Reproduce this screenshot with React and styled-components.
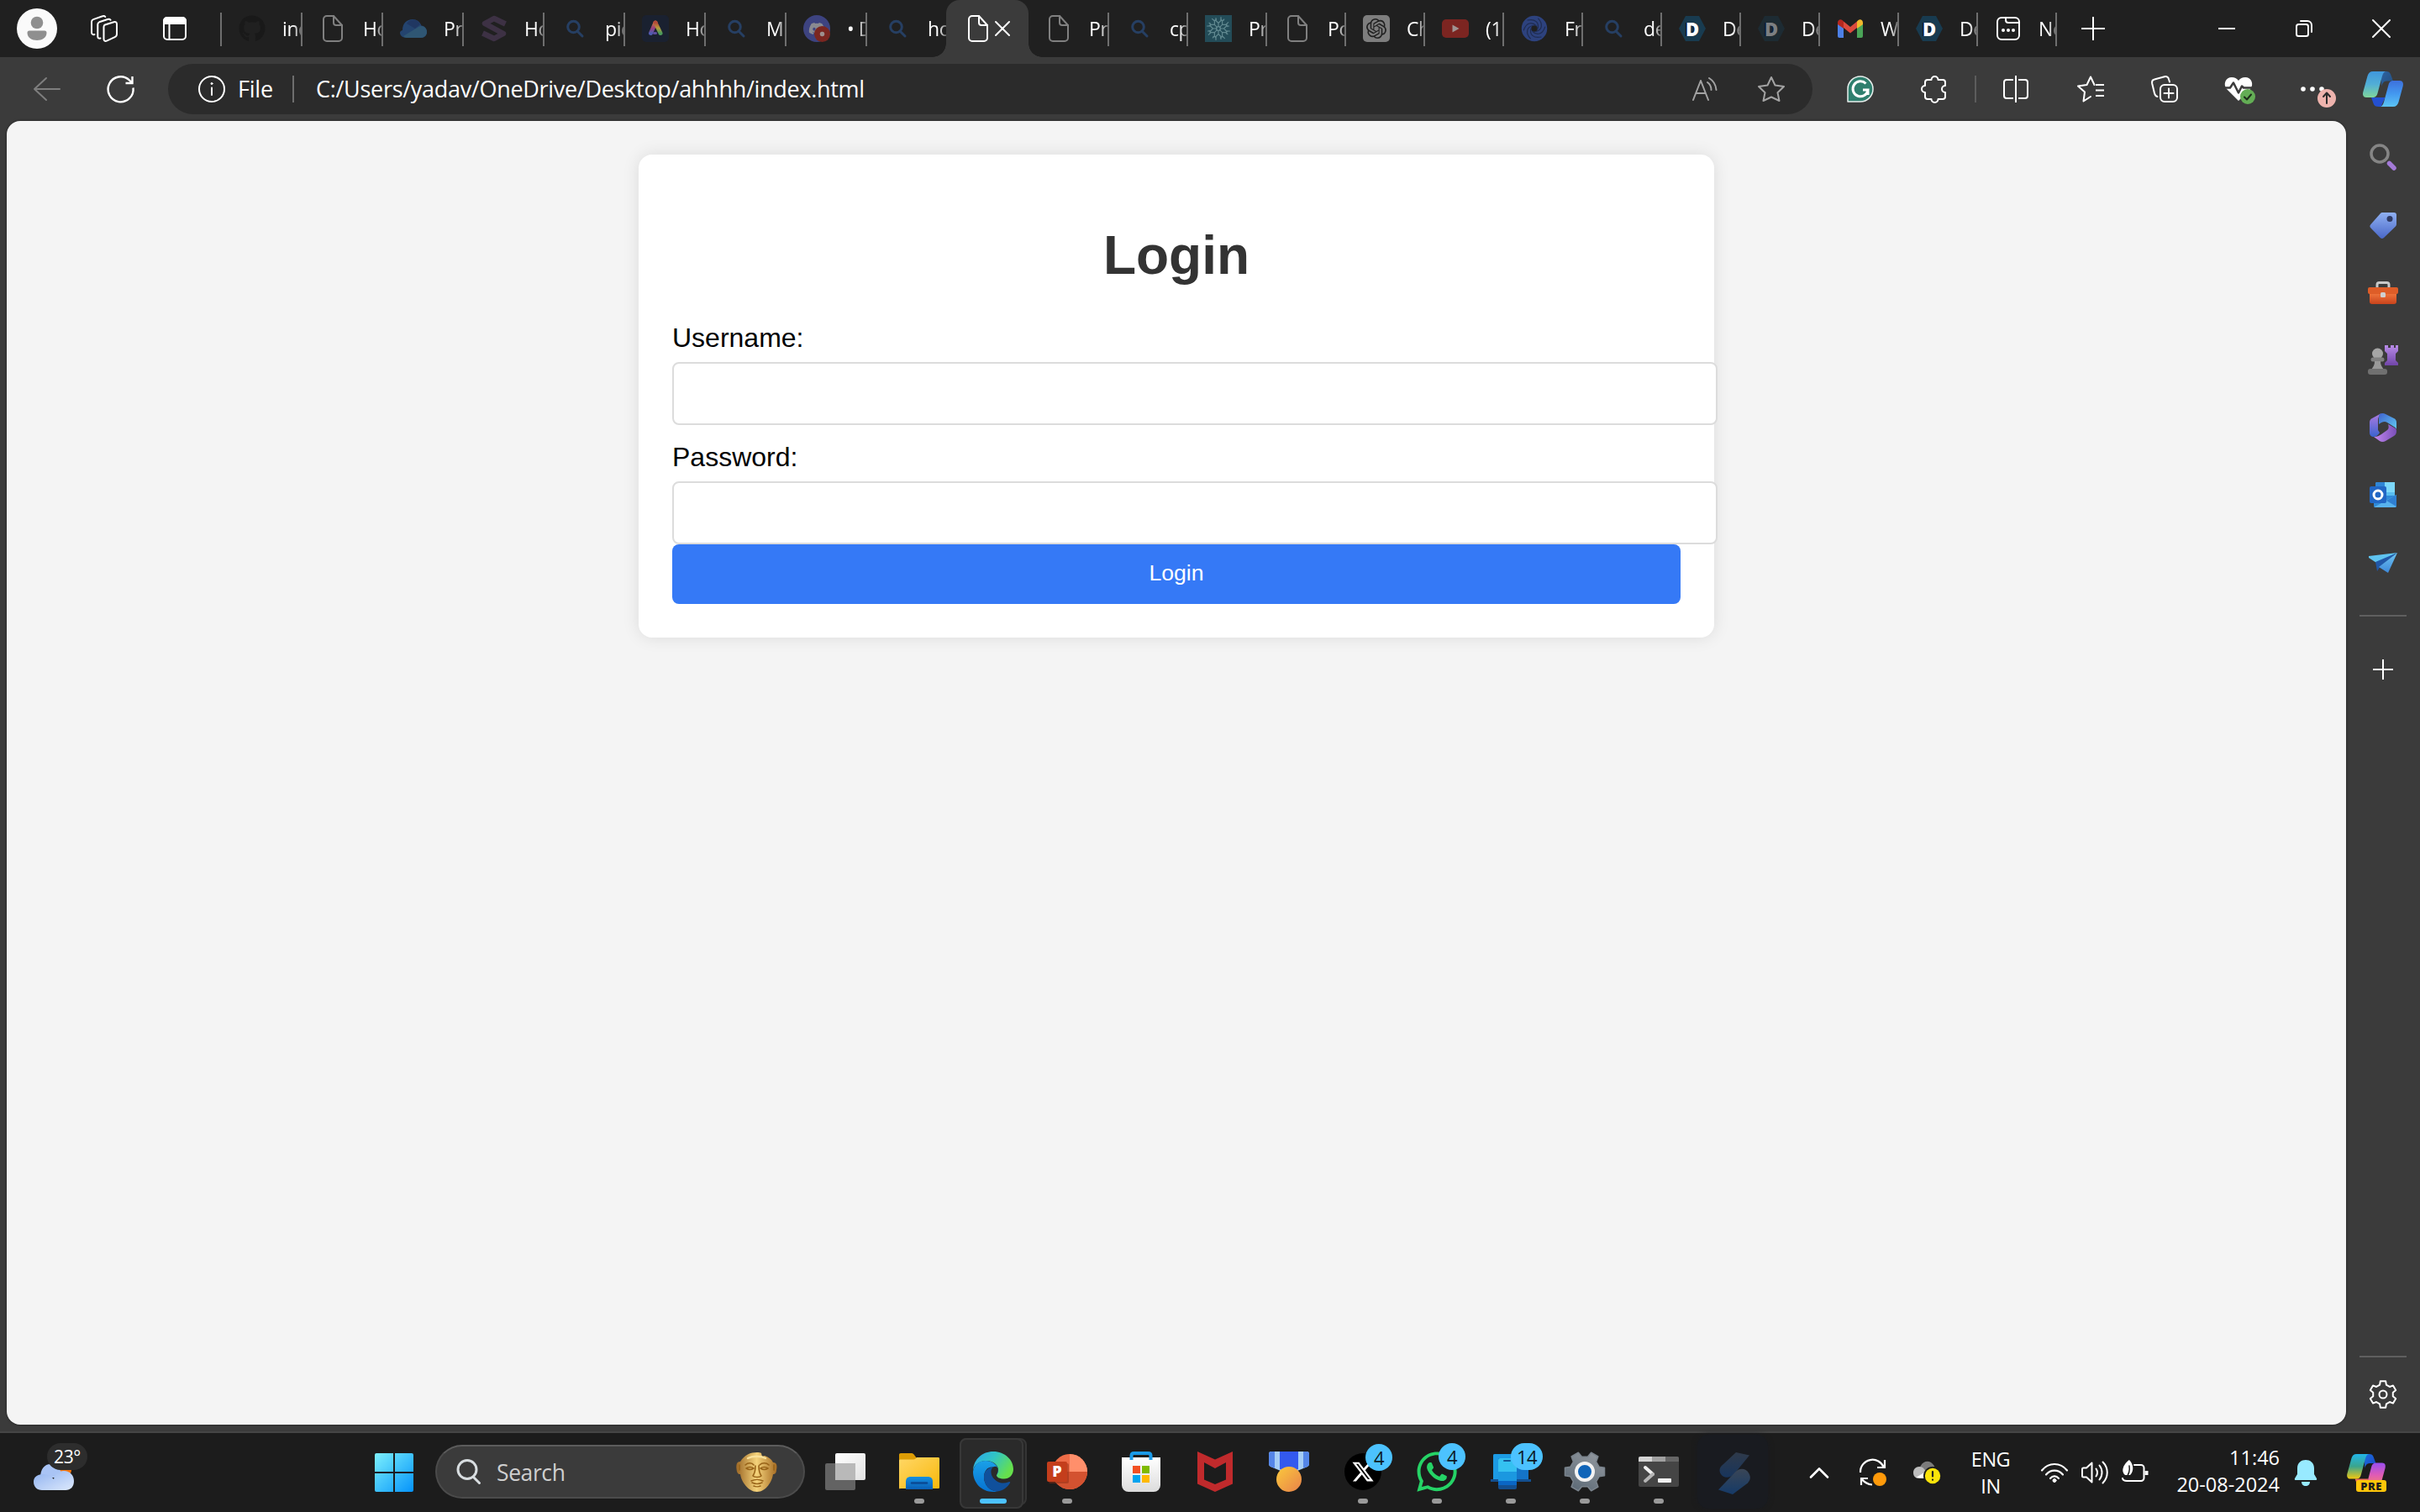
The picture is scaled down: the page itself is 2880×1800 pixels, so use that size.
import React from "react";
import styled, { createGlobalStyle, css } from "styled-components";
import { FaGithub, FaDiscord, FaWhatsapp } from "react-icons/fa";
import { FaXTwitter } from "react-icons/fa6";
import { SiOpenai } from "react-icons/si";

const GlobalStyle = createGlobalStyle`
  * { box-sizing: border-box; }
  body { margin: 0; background: #1c1c1c; font-family: "Open Sans", "Noto Sans", sans-serif; }
  svg { display: block; flex: none; overflow: visible; }
  button { font: inherit; color: inherit; }
`;

const Desktop = styled.div`
  width: 2880px;
  height: 1800px;
  display: flex;
  flex-direction: column;
  overflow: hidden;
  background: #3b3b3b;
  color: #fff;
`;

/* ---------- tab strip ---------- */

const TabStrip = styled.header`
  height: 68px;
  flex: none;
  display: flex;
  background: #202020;
`;

const Slot = styled.button`
  width: ${(p) => p.$w}px;
  flex: none;
  padding: 0 ${(p) => p.$pr || 0}px 0 ${(p) => p.$pl || 0}px;
  margin: 0 ${(p) => p.$mr || 0}px 0 0;
  border: 0;
  background: none;
  display: flex;
  align-items: center;
  justify-content: center;
`;

const Spacer = styled.div`
  flex: 1;
`;

const Avatar = styled.span`
  width: 48px;
  height: 48px;
  border-radius: 50%;
  background: #fafafa;
  display: flex;
  align-items: center;
  justify-content: center;
`;

const StripRule = styled.span`
  width: 2px;
  height: 40px;
  margin: 15px 0 0 6px;
  background: #6e6e6e;
  flex: none;
`;

const TabItem = styled.div`
  width: ${(p) => p.$w}px;
  height: 68px;
  flex: none;
  display: flex;
  align-items: center;
  padding-left: 20px;
`;

const Favicon = styled.span`
  width: 32px;
  height: 32px;
  flex: none;
  display: flex;
  align-items: center;
  justify-content: center;
`;

const TabTitle = styled.span`
  flex: 1;
  margin-left: 20px;
  overflow: hidden;
  white-space: nowrap;
  font-size: 23px;
  line-height: 32px;
  letter-spacing: -0.4px;
  mask-image: linear-gradient(90deg, #000 60%, rgba(0, 0, 0, 0.35) 100%);
`;

const TabRule = styled.span`
  width: 2px;
  height: 40px;
  margin-top: 2px;
  flex: none;
  background: ${(p) => (p.$hidden ? "transparent" : "#6e6e6e")};
`;

const ActiveTab = styled.div`
  position: relative;
  width: 98px;
  height: 68px;
  margin-left: -2px;
  flex: none;
  display: flex;
  align-items: center;
  padding-left: 22px;
  gap: 5px;
  background: #3b3b3b;
  border-radius: 16px 16px 0 0;
  &::before,
  &::after {
    content: "";
    position: absolute;
    bottom: 0;
    width: 16px;
    height: 16px;
  }
  &::before {
    left: -16px;
    background: radial-gradient(circle at 0 0, #202020 15.5px, #3b3b3b 16px);
  }
  &::after {
    right: -16px;
    background: radial-gradient(circle at 100% 0, #202020 15.5px, #3b3b3b 16px);
  }
`;

/* ---------- toolbar ---------- */

const Toolbar = styled.nav`
  height: 76px;
  flex: none;
  display: flex;
  align-items: center;
`;

const AddressBar = styled.div`
  width: 1957px;
  height: 60px;
  margin: 0 13px 0 0;
  padding: 0 33px 0 36px;
  flex: none;
  display: flex;
  align-items: center;
  border-radius: 30px;
  background: #2b2b2b;
`;

const AddressText = styled.span`
  font-size: 27px;
  line-height: 36px;
  letter-spacing: ${(p) => p.$ls}px;
  margin-left: ${(p) => p.$ml}px;
  width: ${(p) => (p.$w ? p.$w + "px" : "auto")};
  white-space: nowrap;
`;

const AddressAction = styled.span`
  flex: none;
  margin-right: ${(p) => p.$mr || 0}px;
`;

const BarRule = styled.span`
  width: 2px;
  height: 32px;
  flex: none;
  background: ${(p) => p.$c};
  margin: 0 ${(p) => p.$m}px;
`;

/* ---------- page + sidebar ---------- */

const Body = styled.div`
  height: 1562px;
  flex: none;
  display: flex;
  padding-left: 8px;
  border-bottom: 2px solid #454545;
`;

const Page = styled.main`
  width: 2784px;
  height: 1552px;
  flex: none;
  padding-top: 40px;
  background: #f4f4f4;
  border-radius: 16px;
  box-shadow: 0 0 3px rgba(0, 0, 0, 0.5);
  font-family: "Liberation Sans", Arial, sans-serif;
  color: #000;
`;

const Card = styled.form`
  width: 1280px;
  height: 575px;
  margin: 0 auto;
  padding: 40px;
  display: flex;
  flex-direction: column;
  background: #fff;
  border-radius: 16px;
  box-shadow: 0 0 20px rgba(0, 0, 0, 0.1);
`;

const Title = styled.h1`
  margin: 43px 0;
  font-size: 64px;
  line-height: 74px;
  font-weight: 700;
  text-align: center;
  color: #333;
`;

const Label = styled.label`
  font-size: 32px;
  line-height: 37px;
  margin-bottom: 10px;
`;

const Input = styled.input`
  width: 1244px;
  height: 75px;
  padding: 20px;
  margin-bottom: ${(p) => (p.$last ? 0 : 20)}px;
  flex: none;
  border: 2px solid #dcdcdc;
  border-radius: 8px;
  background: #fff;
  outline: none;
`;

const Submit = styled.button`
  height: 71px;
  flex: none;
  padding: 0 0 2px;
  border: 0;
  border-radius: 8px;
  background: #3579f6;
  color: #fff;
  font-size: 26.67px;
  line-height: 31px;
`;

const Sidebar = styled.aside`
  width: 88px;
  flex: none;
  display: flex;
  flex-direction: column;
  align-items: center;
  padding-top: 3px;
`;

const SideSlot = styled.button`
  width: 88px;
  height: ${(p) => p.$h || 80.4}px;
  flex: none;
  padding: 0;
  border: 0;
  background: none;
  display: flex;
  align-items: center;
  justify-content: center;
`;

const SideRule = styled.span`
  width: 56px;
  height: 2px;
  flex: none;
  background: #5f5f5f;
  margin-top: ${(p) => p.$mt || 0}px;
`;

/* ---------- taskbar ---------- */

const Taskbar = styled.footer`
  height: 94px;
  flex: none;
  display: flex;
  background: #1c1c1c;
`;

const Weather = styled.div`
  position: relative;
  width: 424px;
  flex: none;
  padding: 37px 0 0 40px;
`;

const Temp = styled.span`
  position: absolute;
  left: 56px;
  top: 12px;
  width: 48px;
  height: 32px;
  border-radius: 16px;
  background: #2d2d2d;
  font-size: 21px;
  line-height: 33px;
  text-align: center;
  letter-spacing: -0.3px;
`;

const StartButton = styled.button`
  width: 90px;
  flex: none;
  padding: 0 0 0 22px;
  border: 0;
  background: none;
  display: flex;
  align-items: center;
`;

const SearchBox = styled.div`
  width: 440px;
  height: 64px;
  margin: 14px 4px 0;
  padding: 0 31px 0 23px;
  flex: none;
  display: flex;
  align-items: center;
  border: 2px solid #4b4b4b;
  border-top-color: #5c5c5c;
  border-radius: 32px;
  background: #3b3b3b;
`;

const SearchText = styled.span`
  flex: 1;
  margin-left: 19px;
  padding-top: 2px;
  font-size: 26.5px;
  line-height: 36px;
  letter-spacing: -0.4px;
  color: #cfcfcf;
`;

const AppSlot = styled.div`
  position: relative;
  width: 88px;
  height: 94px;
  flex: none;
  display: flex;
  align-items: center;
  justify-content: center;
  padding-bottom: 2px;
  ${(p) =>
    p.$state &&
    css`
      &::after {
        content: "";
        position: absolute;
        left: 50%;
        bottom: 10px;
        width: ${p.$state === "focus" ? 32 : 12}px;
        height: 6px;
        transform: translateX(-50%);
        border-radius: 3px;
        background: ${p.$state === "focus" ? "#4cc2ff" : "#9a9a9a"};
      }
    `}
`;

const FocusTile = styled.span`
  position: relative;
  width: 80px;
  height: 80px;
  border: 2px solid #353535;
  border-radius: 8px;
  background: #252525;
  display: flex;
  align-items: center;
  padding-left: 14px;
  &::before {
    content: "";
    position: absolute;
    left: -2px;
    top: -2px;
    width: 72px;
    height: 80px;
    border: 2px solid #383838;
    border-radius: 8px;
    background: #2a2a2a;
  }
  svg {
    position: relative;
  }
`;

const DarkTile = styled.span`
  width: 84px;
  height: 88px;
  padding: 4px 0 0 4px;
  border-radius: 14px;
  background: #191b20;
  box-shadow: 0 0 6px #191b20;
  display: flex;
  align-items: center;
  justify-content: center;
  flex: none;
`;

const Badge = styled.span`
  position: absolute;
  left: ${(p) => p.$x}px;
  top: ${(p) => p.$y}px;
  min-width: 32px;
  height: 32px;
  padding: 0 7px;
  border-radius: 16px;
  background: #4cc2ff;
  color: #0d1a22;
  font-size: 22px;
  line-height: 32px;
  text-align: center;
  letter-spacing: -0.5px;
`;

const Lang = styled.div`
  width: 88px;
  padding-top: 15px;
  flex: none;
  text-align: center;
  font-size: 23.5px;
  line-height: 32px;
  letter-spacing: -0.5px;
`;

const Clock = styled.div`
  width: 140px;
  padding-top: 13px;
  flex: none;
  text-align: right;
  font-size: 23.5px;
  line-height: 32px;
`;

const Round = styled.span`
  width: 44px;
  height: 44px;
  border-radius: 50%;
  background: #000;
  display: flex;
  align-items: center;
  justify-content: center;
`;

/* ---------- icons ---------- */

const Svg = ({ w, h, vb, children, s = "none", sw = 2, ...rest }) => (
  <svg
    width={w}
    height={h || w}
    viewBox={vb || `0 0 ${w} ${h || w}`}
    fill="none"
    stroke={s}
    strokeWidth={sw}
    strokeLinecap="round"
    strokeLinejoin="round"
    {...rest}
  >
    {children}
  </svg>
);

const Grad = ({ id, a, b, c, x2 = 1, y2 = 1 }) => (
  <linearGradient id={id} x1="0" y1="0" x2={x2} y2={y2}>
    <stop offset="0" stopColor={a} />
    {c && <stop offset=".5" stopColor={c} />}
    <stop offset="1" stopColor={b} />
  </linearGradient>
);

const PersonIcon = () => (
  <Svg w={24} h={28}>
    <circle cx="12" cy="7" r="7.3" fill="#8f8f8f" />
    <path d="M3 16.5h18a2.5 2.5 0 0 1 2.500 2.500C23.500 25 18 28 12 28S.5 25 .5 19A2.500 2.500 0 0 1 3 16.500z" fill="#8f8f8f" />
  </Svg>
);

const WorkspacesIcon = () => (
  <Svg w={32} s="#fff">
    <path d="M17 11.500l10.500-3.300c2-.6 3.500.2 3.500 2.300v12c0 1.800-.8 3-2.300 3.600L19 30.600c-2 .8-3.500 0-3.500-2V14c0-1.300.5-2.100 1.500-2.500z" />
    <path d="M11.500 27.500c-2 .5-3.200-.2-3.200-2V11c0-1.300.6-2.200 1.800-2.700L20 5c1.500-.5 2.800-.2 3.600.8" />
    <path d="M4.500 23C2.500 23.500 1 22.700 1 20.500V8c0-1.500.8-2.400 2-2.900L14 1.300c1.300-.5 2.600-.3 3.300.7" />
  </Svg>
);

const TabActionsIcon = () => (
  <Svg w={28} s="#fff">
    <rect x="1" y="1" width="26" height="26" rx="4" />
    <path d="M1 8V5a4 4 0 0 1 4-4h18a4 4 0 0 1 4 4v3z" fill="#fff" />
    <path d="M7.500 8v18" />
  </Svg>
);

const FileIcon = ({ c = "#808080" }) => (
  <Svg w={24} h={32} s={c}>
    <path d="M5 1h8l10 11v15a4 4 0 0 1-4 4H5a4 4 0 0 1-4-4V5a4 4 0 0 1 4-4z" />
    <path d="M13 1v8a3 3 0 0 0 3 3h7" />
  </Svg>
);

const BingSearchIcon = () => (
  <Svg w={20} s="#263f63" sw={3}>
    <circle cx="8.500" cy="8" r="6.800" />
    <path d="M13 13l6 6" />
  </Svg>
);

const CloudFav = () => (
  <Svg w={32} h={22}>
    <path d="M3 13C3 5 8 0 15 0c5 0 9 3 10.500 7.500C29 8 32 11 32 15c0 4-3 7-7 7H8c-5 0-8-3-8-6 0-1.500 1-2.500 3-3z" fill="#24446f" />
    <path d="M4 20L22 9c5-3 10 1 10 6 0 4-3 7-7 7H8c-2 0-3-.7-4-2z" fill="#2f5673" />
    <path d="M8 5c4-6 13-6 16 1l-6 5z" fill="#203762" />
  </Svg>
);

const SFav = () => (
  <Svg w={32} s="#3d3144" sw={6.5} strokeLinecap="butt">
    <path d="M29.500 10.500L16 4 5 10l22 12-11 6L2.500 21.500" />
  </Svg>
);

const AdobeFav = () => (
  <Svg w={32}>
    <defs>
      <Grad id="ad" a="#c9763d" b="#4f5bb0" c="#9c3f7c" x2={0} />
      <Grad id="ad2" a="#b5483a" b="#4c9a5a" c="#b59a3a" x2={0} />
    </defs>
    <rect width="32" height="32" rx="5" fill="#1a2130" />
    <path d="M16 9L10.500 21.500" stroke="url(#ad)" strokeWidth="5" />
    <path d="M16 9l6 12.500" stroke="url(#ad2)" strokeWidth="5" />
    <path d="M14.500 21.500h2" stroke="#5e4fa0" strokeWidth="3" />
  </Svg>
);

const DiscordWrap = styled.span`
  position: relative;
  width: 32px;
  height: 32px;
  border-radius: 50%;
  background: #3d4380;
  color: #898a90;
  display: flex;
  align-items: center;
  justify-content: center;
  &::after {
    content: "";
    position: absolute;
    right: 0;
    bottom: 0;
    width: 19px;
    height: 19px;
    border-radius: 50%;
    background: radial-gradient(circle, #9d8f8d 2.500px, #7a2620 3.200px);
  }
`;

const NeuralFav = () => (
  <Svg w={32} s="#60888f" sw={1.2}>
    <rect width="32" height="32" fill="#234c58" stroke="none" />
    {[0, 45, 90, 135, 180, 225, 270, 315].map((a) => (
      <path key={a} d="M16 14V9.500l-3-3V3.500M16 9.500l3-3V2.500M13 6.500l-2.500-.5M19 6.500l3 0" transform={`rotate(${a} 16 16)`} />
    ))}
    <circle cx="16" cy="16" r="2.500" />
  </Svg>
);

const GptWrap = styled.span`
  width: 32px;
  height: 32px;
  border-radius: 5px;
  background: #7e7e7e;
  color: #202020;
  display: flex;
  align-items: center;
  justify-content: center;
`;

const YoutubeFav = () => (
  <Svg w={32} h={22}>
    <rect width="32" height="22" rx="5" fill="#7c2521" />
    <path d="M12.500 6.500l8 4.500-8 4.500z" fill="#a09492" />
  </Svg>
);

const SwirlFav = () => (
  <Svg w={32} s="#2d427e" sw={3}>
    <circle cx="16" cy="16" r="9.500" strokeWidth="11.500" />
    <g stroke="#1f2c50" strokeWidth="1.200">
      {[0, 60, 120, 180, 240, 300].map((a) => (
        <path key={a} d="M20 16c2-7-3-12-12-10" transform={`rotate(${a} 16 16)`} />
      ))}
    </g>
  </Svg>
);

const HexBox = styled.span`
  width: 32px;
  height: 30px;
  clip-path: polygon(25% 0, 75% 0, 100% 50%, 75% 100%, 25% 100%, 0 50%);
  background: ${(p) => (p.$dim ? "#1d2b33" : "#183b50")};
  color: ${(p) => (p.$dim ? "#7c7f82" : "#fff")};
  font: 800 22px/30px "Open Sans", sans-serif;
  text-align: center;
  text-shadow: -2px 0 0 #0e1d33;
`;

const GmailFav = () => (
  <Svg w={30} h={22}>
    <path d="M0 4v16a2 2 0 0 0 2 2h5V9z" fill="#4d80e6" />
    <path d="M30 4v16a2 2 0 0 1-2 2h-5V9z" fill="#4aa457" />
    <path d="M23 2.500L15 9 7 2.500V10l8 6.500 8-6.500z" fill="#dc4a3d" />
    <path d="M0 4v2l7 5V2.500L5.500 1C3-1 0 1 0 4z" fill="#b5281f" />
    <path d="M30 4v2l-7 5V2.500L24.500 1C27-1 30 1 30 4z" fill="#f0b92d" />
  </Svg>
);

const NewTabFav = () => (
  <Svg w={28} s="#fff">
    <rect x="1" y="1" width="26" height="26" rx="5" />
    <path d="M11 1v3a3 3 0 0 0 3 3h13" />
    <g fill="#fff" stroke="none">
      <circle cx="8" cy="16" r="2" />
      <circle cx="14" cy="16" r="2" />
      <circle cx="20" cy="16" r="2" />
    </g>
  </Svg>
);

const favicons = {
  github: <FaGithub size={32} color="#191919" />,
  file: <FileIcon />,
  cloud: <CloudFav />,
  s: <SFav />,
  search: <BingSearchIcon />,
  adobe: <AdobeFav />,
  discord: (
    <DiscordWrap>
      <FaDiscord size={20} />
    </DiscordWrap>
  ),
  neural: <NeuralFav />,
  gpt: (
    <GptWrap>
      <SiOpenai size={24} />
    </GptWrap>
  ),
  youtube: <YoutubeFav />,
  swirl: <SwirlFav />,
  d: <HexBox>D</HexBox>,
  dDim: <HexBox $dim>D</HexBox>,
  gmail: <GmailFav />,
  newtab: <NewTabFav />,
};

const tabsBefore = [
  ["github", "ind"],
  ["file", "Ho"],
  ["cloud", "Pr"],
  ["s", "Ho"],
  ["search", "pic"],
  ["adobe", "Ho"],
  ["search", "M"],
  ["discord", "• D"],
  ["search", "ho"],
];

const tabsAfter = [
  ["file", "Pr", 96],
  ["search", "cp"],
  ["neural", "Pr"],
  ["file", "Po"],
  ["gpt", "Ch"],
  ["youtube", "(1"],
  ["swirl", "Fr"],
  ["search", "de"],
  ["d", "De"],
  ["dDim", "De"],
  ["gmail", "W"],
  ["d", "De"],
  ["newtab", "Ne"],
];

const Tab = ({ icon, title, w, last }) => (
  <TabItem $w={w}>
    <Favicon>{favicons[icon]}</Favicon>
    <TabTitle>{title}</TabTitle>
    <TabRule $hidden={last} />
  </TabItem>
);

const CopilotIcon = ({ w, h, tray }) => (
  <Svg w={w} h={h} vb="0 0 48 42">
    <defs>
      <Grad id={tray ? "t1" : "c1"} a={tray ? "#22b5e8" : "#3f97dd"} c={tray ? "#3aa58d" : "#52aed6"} b={tray ? "#f2c80f" : "#80d69a"} x2={0} />
      <Grad id={tray ? "t2" : "c2"} a={tray ? "#9a4df0" : "#3d70dc"} c={tray ? "#e05cb4" : "#4398f0"} b={tray ? "#f98a5c" : "#5cc4f4"} x2={0} />
      <Grad id={tray ? "t3" : "c3"} a={tray ? "#1a6fe0" : "#2d62a0"} b={tray ? "#1c45c0" : "#234f80"} />
    </defs>
    <path d="M22 0h6c4 0 5 3 6 6l2 5.500h-8c-3 0-5 3-6 6z" fill={`url(#${tray ? "t3" : "c3"})`} />
    <path d="M10 31l2.500 7c1 3 3 4 6 4h3l5-11z" fill={tray ? "#f2705c" : "#2450d0"} />
    <path d="M12 0h16c-2.500 0-4 2-5 5.500L17.500 26c-1 3.500-2.500 5-6 5H4c-3.500 0-4.600-3-3.700-6.500L5.500 5.500C6.500 2 8.500 0 12 0z" fill={`url(#${tray ? "t1" : "c1"})`} />
    <path d="M36 42H20c2.500 0 4-2 5-5.500L30.500 16c1-3.500 2.500-5 6-5H44c3.500 0 4.600 3 3.700 6.500L42.500 36.500C41.500 40 39.500 42 36 42z" fill={`url(#${tray ? "t2" : "c2"})`} />
  </Svg>
);

const GearPath = ({ cx, cy, r, r2, ...rest }) => {
  const pts = [];
  for (let i = 0; i < 6; i++) {
    const a = (i * Math.PI) / 3 - Math.PI / 2;
    [[-0.33, r2], [-0.2, r], [0.2, r], [0.33, r2]].forEach(([d, rr]) =>
      pts.push(`${(cx + rr * Math.cos(a + d)).toFixed(2)} ${(cy + rr * Math.sin(a + d)).toFixed(2)}`)
    );
  }
  return <path d={`M${pts.join("L")}z`} {...rest} />;
};

const SideIcons = [
  <Svg w={32} key="search">
    <circle cx="12" cy="12" r="10" stroke="#858585" strokeWidth="3.500" />
    <path d="M23.500 23.500l5.500 5.500" stroke="#a37ad8" strokeWidth="5.500" />
  </Svg>,
  <Svg w={32} key="tag">
    <defs><Grad id="tg" a="#8fb0f2" b="#4a68c8" x2={0} /></defs>
    <path d="M15 1h14a3 3 0 0 1 3 3v11c0 1-.3 1.700-1 2.400L17 31c-1.300 1.300-3 1.300-4.300 0L1.500 19.500c-1.500-1.500-1.500-3 0-4.500L13 2c.6-.7 1.200-1 2-1z" fill="url(#tg)" />
    <circle cx="24" cy="8.500" r="3.500" fill="#2f3b66" />
  </Svg>,
  <Svg w={36} h={26} key="tools">
    <defs><Grad id="tb" a="#f0763c" b="#c9431c" x2={0} /></defs>
    <path d="M11 8V4c0-2 1-2.500 2.500-2.500h9C24 1.500 25 2 25 4v4" stroke="#c8c8c8" strokeWidth="3" />
    <path d="M2 14h32v10a3 3 0 0 1-3 3H5a3 3 0 0 1-3-3z" fill="url(#tb)" />
    <rect y="7" width="36" height="8" rx="2" fill="#de5d28" />
    <rect x="15" y="13" width="6" height="6" rx="1.500" fill="#d0d0d0" />
  </Svg>,
  <Svg w={36} key="games">
    <defs><Grad id="rk" a="#b98ce8" b="#7045a8" x2={0} /></defs>
    <path d="M20 1h4v3h3V1h4v3h2V1h3v7l-3 3v8l3 3v3H20v-3l3-3v-8l-3-3z" fill="url(#rk)" />
    <circle cx="11.500" cy="11" r="6.500" fill="#a5a5a5" />
    <rect x="3.500" y="15.500" width="16" height="5" rx="2.500" fill="#808080" />
    <path d="M8 20h7c0 4 1 6 4 10H4c3-4 4-6 4-10z" fill="#999" />
    <rect y="29" width="23" height="7" rx="3" fill="#707070" />
  </Svg>,
  <Svg w={32} h={34} key="m365">
    <defs>
      <Grad id="m1" a="#b07be0" b="#3a63d0" x2={0} />
      <Grad id="m2" a="#3f63cf" b="#62cdf2" />
      <Grad id="m3" a="#c48af0" b="#7a4fb8" x2={1} y2={0} />
    </defs>
    <path d="M14 0L3 6C1 7 0 8.500 0 11v12c0 3 2 5 5 5 3 0 6-3 7-5l-2-3V9c0-4 1-6 4-9z" fill="url(#m1)" />
    <path d="M12 1c2-1.300 5-1.300 7 0l10 5c2 1 3 2.500 3 5v9c0-2-1-3-3-4l-8-5c-3-2-6-1-10 2V7c0-3 0-5 1-6z" fill="url(#m2)" />
    <path d="M32 21c0 3-1 5-3 6l-10 6c-2 1.300-5 1.300-7 0l-7-5c4 0 6-1 9-3l7-5c2-1.500 2-4 1-7l7 4c2 1 3 2 3 4z" fill="url(#m3)" />
  </Svg>,
  <Svg w={32} key="outlook">
    <rect x="7" y="1" width="23" height="22" rx="2" fill="#59bdf0" />
    <path d="M18 1h12v12H18z" fill="#7cd8fa" />
    <path d="M7 12h11V1H9a2 2 0 0 0-2 2z" fill="#2f86d6" />
    <path d="M5 17h27v12a2 2 0 0 1-2 2H7a2 2 0 0 1-2-2z" fill="#2f8ad8" />
    <path d="M5 31l27-15v13a2 2 0 0 1-2 2z" fill="#58b3ee" />
    <path d="M32 16v14L20 23z" fill="#2f7fd2" />
    <rect y="6" width="20" height="20" rx="2" fill="#2267c5" />
    <circle cx="10" cy="16" r="5" stroke="#fff" strokeWidth="3" />
  </Svg>,
  <Svg w={34} h={24} key="drop">
    <defs><Grad id="dp" a="#6fc6f2" b="#3d88da" x2={0} /></defs>
    <path d="M0 4L34 0 10 12.500 0 6z" fill="#5fc4f0" />
    <path d="M8 11L34 0 14 16l-4 6z" fill="#2158a8" />
    <path d="M34 0L23 24 12 17z" fill="url(#dp)" />
  </Svg>,
];

const WeatherIcon = () => (
  <Svg w={48} h={31}>
    <defs><Grad id="wc" a="#8fb2f0" b="#dde9fc" /></defs>
    <circle cx="38" cy="7" r="7" fill="#f7760c" />
    <path d="M8 16C8 6 13 0 20 0c8 0 14 8 14 16z" fill="#a9c4f5" />
    <path d="M12 12c5 0 9 2 12 6 1-6 5-10 12-10 7 0 12 5 12 12s-4 11-10 11H10C4 31 0 27 0 21s5-9 12-9z" fill="url(#wc)" />
  </Svg>
);

const WindowsIcon = () => (
  <Svg w={46}>
    <defs><linearGradient id="wn" gradientUnits="userSpaceOnUse" x1="0" y1="0" x2="46" y2="46"><stop offset="0" stopColor="#7df0fd" /><stop offset=".5" stopColor="#3fc2fb" /><stop offset="1" stopColor="#0593fb" /></linearGradient></defs>
    <path d="M2 0h20v22H0V2a2 2 0 0 1 2-2zM24 0h20a2 2 0 0 1 2 2v20H24zM0 24h22v22H2a2 2 0 0 1-2-2zM24 24h22v20a2 2 0 0 1-2 2H24z" fill="url(#wn)" />
  </Svg>
);

const MaskIcon = () => (
  <Svg w={49} h={47}>
    <defs><Grad id="mk" a="#9c6826" b="#a66c24" c="#f4d27a" x2={1} y2={0} /></defs>
    <path d="M5 11C10 3 17 0 25 0c2 0 4 0 5 1l1 4 3-1c5 2 8 4 10 8 5 0 5 5 4 9 0 4-2 5-4 5-1 8-8 21-19 21S6 34 5 26c-3 0-4-2-4.500-6S0 11 5 11z" fill="url(#mk)" />
    <g stroke="#996419" strokeWidth="1.600">
      <path d="M11 15c3-3 8-3 10 0M28 15c3-3 8-3 11 0M12 19c3-2 6-2 9 0-3 2-6 2-9 0zM29 19c3-2 6-2 9 0-3 2-6 2-9 0zM23 16c0 5-1 9-3 12 2 2 8 2 10 0-2-3-3-7-3-12M18 34c4-2 10-2 14 0M19 36c4 2 8 2 12 0M4 15v6M45 15v6M21 40c2 1 6 1 8 0" />
    </g>
    <path d="M14 7c6-3 15-3 21 0" stroke="#fae19a" strokeWidth="2.500" />
  </Svg>
);

const TaskViewIcon = () => (
  <Svg w={48} h={44}>
    <defs><Grad id="tv" a="#fff" b="#e2e2e2" /></defs>
    <rect x="12" width="36" height="32" rx="2" fill="url(#tv)" />
    <rect y="12" width="36" height="32" rx="2" fill="#777" opacity=".78" />
    <path d="M12 12h24v20H12z" fill="#b9b9b9" />
  </Svg>
);

const ExplorerIcon = () => (
  <Svg w={48} h={44}>
    <defs><Grad id="fe" a="#ffd766" b="#f9b80c" /><Grad id="fb" a="#1590e0" b="#0a5fb5" x2={0} /></defs>
    <path d="M2 0h12c2 0 3 .6 4 2l3 4h25v8H0V2c0-1.300.7-2 2-2z" fill="#dd9d05" />
    <path d="M0 9c0-1 .6-1.500 1.500-1.500H16c2 0 3-.5 4-1.500l1-1h25.500c1 0 1.500.6 1.500 1.500v34c0 1-.6 1.500-1.500 1.500h-45C.6 43 0 42 0 41z" fill="url(#fe)" />
    <path d="M8 43V34c0-4 2-6 6-6h20c4 0 6 2 6 6v9z" fill="url(#fb)" />
    <path d="M15 35.500h18" stroke="#0a4a94" strokeWidth="2.500" />
  </Svg>
);

const EdgeIcon = () => (
  <Svg w={48}>
    <defs>
      <Grad id="e1" a="#2aa5f0" b="#66e04c" c="#31c5c4" x2={1} y2={0.5} />
      <Grad id="e2" a="#1aa0e8" b="#0672d2" x2={0} />
    </defs>
    <path d="M0 22C1 9 11 0 24 0c14 0 24 10 24 21 0 7-5 11.500-11 11.500-5 0-9-1.500-9-4.500 0-1.500 2-2.500 2-6C30 16 24 11 16 11 8 11 2 15 0 22z" fill="url(#e1)" />
    <path d="M24 18.500c-7-1-11 5-11 12C13 40 20 47 29 47.500 27 48 25.500 48 24 48 10 48 0 37 0 24 1 15 8 11 15 11c9 0 15 6 15 12 0 3-2 4-2 5.500C24 28 22 22 24 18.500z" fill="url(#e2)" />
    <path d="M24 18.500c-7 1-11 5-11 12C13 40 20 47 29 47.500c7-1 12-5 15-10 .5-1 0-2-1.500-1.300C31 41 20 33 24 18.500z" fill="#10509c" />
    <path d="M29 19c-3-3-8 0-7.500 6 .4 5 3.500 8 7 10-2-3-1.500-5-.5-7 1-2 3-6 1-9z" fill="#2a2a2a" />
  </Svg>
);

const PowerPointIcon = () => (
  <Svg w={48} h={42}>
    <circle cx="27" cy="21" r="21" fill="#ed6c47" />
    <path d="M27 0a21 21 0 0 1 21 21H27z" fill="#ff8f6b" />
    <path d="M6 21h42a21 21 0 0 1-42 0z" fill="#d35230" />
    <rect x="2" y="11" width="24" height="24" rx="2" fill="#8f2c12" opacity=".5" />
    <rect y="9" width="24" height="24" rx="2" fill="#c43e1c" />
    <text x="12" y="27" fontSize="18" fontWeight="800" fontFamily="Open Sans, sans-serif" textAnchor="middle" fill="#fff">P</text>
  </Svg>
);

const StoreIcon = () => (
  <Svg w={46} h={48}>
    <defs><Grad id="st" a="#fff" b="#dcdcdc" x2={0} /></defs>
    <path d="M0 7h46v33a8 8 0 0 1-8 8H8a8 8 0 0 1-8-8z" fill="url(#st)" />
    <path d="M11.500 10V5c0-2 1-3 3-3h17c2 0 3 1 3 3v5" stroke="#1a9ae8" strokeWidth="4" strokeLinecap="butt" />
    <path d="M13 17h9v9h-9z" fill="#f25022" /><path d="M24 17h9v9h-9z" fill="#7fba00" />
    <path d="M13 28h9v9h-9z" fill="#00a4ef" /><path d="M24 28h9v9h-9z" fill="#ffb900" />
  </Svg>
);

const McAfeeIcon = () => (
  <Svg w={42} h={48}>
    <path fillRule="evenodd" d="M0 0l21 9.500L42 0v38.500L21 48 0 38.500zM8 13v20.500L21 39l13-5.500V13L21 20z" fill="#c02a2c" />
  </Svg>
);

const MedalIcon = () => (
  <Svg w={48}>
    <defs><Grad id="md" a="#fbc93c" b="#e8824a" /></defs>
    <path d="M3 0h42c2 0 3 1 3 3v11c0 2-.5 3-2 4l-12 5H14L2 18c-1.500-1-2-2-2-4V3c0-2 1-3 3-3z" fill="#a5cdf5" />
    <path d="M13 0h22v21l-11 4-11-4z" fill="#3359ee" />
    <path d="M0 3c0-2 1-3 3-3h4v20l-5-2c-1.500-1-2-2-2-4zM48 3c0-2-1-3-3-3h-4v20l5-2c1.500-1 2-2 2-4z" fill="#5586e8" />
    <circle cx="24" cy="33" r="15" fill="url(#md)" />
  </Svg>
);

const PhoneLinkIcon = () => (
  <Svg w={48} h={42}>
    <rect x="3" width="42" height="32" rx="2" fill="#1474c8" />
    <path d="M3 2a2 2 0 0 1 2-2h26L20 32H3z" fill="#1c9be4" />
    <rect y="30" width="48" height="3" fill="#134f90" />
    <rect x="9" y="5" width="22" height="37" rx="2" fill="#134f90" />
    <path d="M9 21h22v11H9z" fill="#1b98e0" /><path d="M9 32h22v5H9z" fill="#0a66c4" />
    <path d="M11 5h18a2 2 0 0 1 2 2v14H9V7c0-1 1-2 2-2z" fill="#35c1f1" />
    <path d="M16 8h7M26 8h1" stroke="#13579a" />
  </Svg>
);

const SettingsIcon = () => (
  <Svg w={48} h={46}>
    <defs><Grad id="sg" a="#8e959c" b="#5f6c78" x2={0} /></defs>
    <g transform="rotate(30 24 23)"><GearPath cx={24} cy={23} r={24} r2={18} fill="url(#sg)" stroke="#7a838c" strokeWidth="1.500" /></g>
    <circle cx="24" cy="23" r="10" fill="#0f64b8" stroke="#f2f2f2" strokeWidth="4" />
  </Svg>
);

const TerminalIcon = () => (
  <Svg w={48} h={36}>
    <rect width="48" height="36" rx="2" fill="#454545" />
    <path d="M2 0h14v6H0V2a2 2 0 0 1 2-2z" fill="#d4d4d4" /><path d="M16 0h16v6H16z" fill="#a0a0a0" /><path d="M32 0h14a2 2 0 0 1 2 2v4H32z" fill="#666" />
    <path d="M8 13l9 8" stroke="#f0f0f0" strokeWidth="4" /><path d="M17 21l-9 8" stroke="#b5b5b5" strokeWidth="4" />
    <rect x="23" y="26" width="16" height="5" rx="1" fill="#f0f0f0" />
  </Svg>
);

const StormIcon = () => (
  <Svg w={38} h={50}>
    <defs>
      <Grad id="sm" a="#2f3a4a" b="#18355c" x2={0} />
      <Grad id="sm2" a="#3a4656" b="#153a68" x2={0} />
    </defs>
    <path d="M21 0l16 3.500-18 22C14 31 6 31 3 26c-3-5-1-9 3-12z" fill="url(#sm)" />
    <path d="M17 50L0 44.500l20-21c6-6 13-4 16 1 3 5 2 8-1 12z" fill="url(#sm2)" />
  </Svg>
);

const PreBadge = styled.span`
  position: absolute;
  left: 11px;
  top: 56px;
  width: 36px;
  height: 14px;
  border-radius: 3px;
  background: #ffc60a;
  color: #1c1c1c;
  font: 800 13px/14px "Open Sans", sans-serif;
  letter-spacing: 0.5px;
  text-align: center;
`;

const CopilotTray = styled.span`
  position: relative;
  width: 87px;
  flex: none;
  padding-top: 25px;
`;

export default function App() {
  return (
    <>
      <GlobalStyle />
      <Desktop>
        <TabStrip>
          <Slot $w={88}><Avatar><PersonIcon /></Avatar></Slot>
          <Slot $w={72}><WorkspacesIcon /></Slot>
          <Slot $w={96}><TabActionsIcon /></Slot>
          <StripRule />
          {tabsBefore.map(([icon, title], i) => (
            <Tab key={i} icon={icon} title={title} w={96} last={i === tabsBefore.length - 1} />
          ))}
          <ActiveTab>
            <Favicon><FileIcon c="#fff" /></Favicon>
            <Svg w={16} s="#fff"><path d="M0 0l16 16M16 0L0 16" /></Svg>
          </ActiveTab>
          {tabsAfter.map(([icon, title, w], i) => (
            <Tab key={i} icon={icon} title={title} w={w || 94} />
          ))}
          <Slot $w={86}><Svg w={28} s="#fff"><path d="M14 0v28M0 14h28" strokeLinecap="butt" /></Svg></Slot>
          <Spacer />
          <Slot $w={92}><Svg w={20} h={2} s="#fff"><path d="M0 1h20" strokeLinecap="butt" /></Svg></Slot>
          <Slot $w={92}>
            <Svg w={20} s="#fff">
              <rect x="1" y="5" width="14" height="14" rx="2.500" />
              <path d="M6 1h8a5 5 0 0 1 5 5v8" />
            </Svg>
          </Slot>
          <Slot $w={92}><Svg w={20} s="#fff"><path d="M0 0l20 20M20 0L0 20" /></Svg></Slot>
        </TabStrip>

        <Toolbar>
          <Slot $w={112}><Svg w={32} h={28} s="#7e7e7e"><path d="M31 14H1M15 1L1 14l14 13" /></Svg></Slot>
          <Slot $w={64} $mr={24}>
            <Svg w={32} s="#fff" sw={2.4}><path d="M30.500 14.500A15 15 0 1 1 26 5.500l3 3M29.500 1v8h-8" strokeLinecap="butt" strokeLinejoin="miter" /></Svg>
          </Slot>
          <AddressBar>
            <Svg w={32} s="#fff"><circle cx="16" cy="16" r="15" /><path d="M16 14.500V23" /><circle cx="16" cy="9.500" r="1" fill="#fff" strokeWidth="1" /></Svg>
            <AddressText $ls={-0.2} $ml={15} $w={65}>File</AddressText>
            <BarRule $c="#6e6e6e" $m={0} />
            <AddressText $ls={-0.3} $ml={26}>C:/Users/yadav/OneDrive/Desktop/ahhhh/index.html</AddressText>
            <Spacer />
            <AddressAction $mr={48}>
              <Svg w={30} h={28} s="#a3a3a3">
                <path d="M1 27L10 4l9 23M4.500 19h11" />
                <path d="M18 6c3 2 4.500 5 4.500 9M20 1c5 3 8 8 8.500 14" />
              </Svg>
            </AddressAction>
            <AddressAction>
              <Svg w={32} h={30} s="#a3a3a3">
                <path d="M16 1l4.500 9.500L31 12l-7.500 7.300L25.500 29 16 24.500 6.500 29l2-9.700L1 12l10.500-1.500z" />
              </Svg>
            </AddressAction>
          </AddressBar>
          <Slot $w={88}>
            <Svg w={32}>
              <path d="M1 31V16a15 15 0 1 1 15 15z" fill="#2f7f6e" stroke="#e8efed" strokeWidth="1.500" />
              <path d="M22.500 9.500A9 9 0 1 0 25 17h-6M25 16v7" stroke="#fff" strokeWidth="3" strokeLinecap="butt" strokeLinejoin="miter" />
            </Svg>
          </Slot>
          <Slot $w={88}>
            <Svg w={30} h={32} s="#fff">
              <path d="M7 5h4.500a4 4 0 0 1 8 0H25a3 3 0 0 1 3 3v4a4 4 0 0 0 0 8v5a3 3 0 0 1-3 3h-5.500a4 4 0 0 1-8 0H7a3 3 0 0 1-3-3v-5a4 4 0 0 1 0-8V8a3 3 0 0 1 3-3z" />
            </Svg>
          </Slot>
          <BarRule $c="#5c5c5c" $m={4} />
          <Slot $w={88} $pr={2}>
            <Svg w={30} h={32} s="#fff">
              <path d="M15 0v32M12 5H4a3 3 0 0 0-3 3v16a3 3 0 0 0 3 3h8M18 5h8a3 3 0 0 1 3 3v16a3 3 0 0 1-3 3h-8" strokeLinecap="butt" />
            </Svg>
          </Slot>
          <Slot $w={88}>
            <Svg w={32} s="#fff">
              <path d="M16 25l-8.500 5.500 1.500-11L1 12.500 11.500 11 16 1.500 20.500 11" />
              <path d="M22 11h10M22 17.500h10M22 24h10" strokeLinecap="butt" />
            </Svg>
          </Slot>
          <Slot $w={88}>
            <Svg w={32} s="#fff">
              <rect x="11" y="11" width="20" height="20" rx="5" />
              <path d="M21 15.500v11M15.500 21h11" />
              <path d="M7.500 25C5 24.500 4.500 23 4 21L1.200 9.500C.7 7 2 5 4 4.500L16 1.200c2.500-.6 4.500.6 5 3L22 7.500" />
            </Svg>
          </Slot>
          <Slot $w={88}>
            <Svg w={34} h={32}>
              <path d="M17 30L3 16C-2 10 2 2 9 2c3.500 0 6 1.500 8 4 2-2.500 4.500-4 8-4 7 0 11 8 6 14z" fill="#fff" />
              <path d="M-1 14.500h8l4-6 6 12 4-8 2 2h11" stroke="#3b3b3b" strokeWidth="2.500" />
              <circle cx="28" cy="25" r="9" fill="#63ad55" />
              <path d="M24 25.500l3 3 5-6" stroke="#1c2e1a" />
            </Svg>
          </Slot>
          <Slot $w={88}>
            <Svg w={28} h={32}>
              <g fill="#fff"><circle cx="3" cy="16" r="2.800" /><circle cx="14" cy="16" r="2.800" /><circle cx="25" cy="16" r="2.800" /></g>
              <circle cx="31" cy="27" r="11" fill="#eeb3ad" />
              <path d="M31 33V21M27 25l4-4.500 4 4.500" stroke="#2b2b2b" />
            </Svg>
          </Slot>
          <Slot $w={80}><CopilotIcon w={48} h={42} /></Slot>
        </Toolbar>

        <Body>
          <Page>
            <Card onSubmit={(e) => e.preventDefault()}>
              <Title>Login</Title>
              <Label htmlFor="username">Username:</Label>
              <Input id="username" type="text" />
              <Label htmlFor="password">Password:</Label>
              <Input id="password" type="password" $last />
              <Submit type="submit">Login</Submit>
            </Card>
          </Page>
          <Sidebar>
            {SideIcons.map((icon, i) => <SideSlot key={i}>{icon}</SideSlot>)}
            <SideRule $mt={22} />
            <SideSlot $h={126}><Svg w={24} s="#fff"><path d="M12 0v24M0 12h24" strokeLinecap="butt" /></Svg></SideSlot>
            <Spacer />
            <SideRule />
            <SideSlot $h={88}>
              <Svg w={32} h={34} s="#fff">
                <GearPath cx={16} cy={17} r={16} r2={12} />
                <circle cx="16" cy="17" r="4.500" />
              </Svg>
            </SideSlot>
          </Sidebar>
        </Body>

        <Taskbar>
          <Weather>
            <WeatherIcon />
            <Temp>23°</Temp>
          </Weather>
          <StartButton><WindowsIcon /></StartButton>
          <SearchBox>
            <Svg w={29} h={30} s="#d8dde0" sw={3}><circle cx="13" cy="12.500" r="11" /><path d="M20 21l7.500 7.500" /></Svg>
            <SearchText>Search</SearchText>
            <MaskIcon />
          </SearchBox>
          <AppSlot><TaskViewIcon /></AppSlot>
          <AppSlot $state="run"><ExplorerIcon /></AppSlot>
          <AppSlot $state="focus"><FocusTile><EdgeIcon /></FocusTile></AppSlot>
          <AppSlot $state="run"><PowerPointIcon /></AppSlot>
          <AppSlot><StoreIcon /></AppSlot>
          <AppSlot><McAfeeIcon /></AppSlot>
          <AppSlot><MedalIcon /></AppSlot>
          <AppSlot $state="run">
            <Round><FaXTwitter size={28} /></Round>
            <Badge $x={47} $y={13}>4</Badge>
          </AppSlot>
          <AppSlot $state="run">
            <FaWhatsapp size={54} color="#25d366" />
            <Badge $x={46} $y={12}>4</Badge>
          </AppSlot>
          <AppSlot $state="run">
            <PhoneLinkIcon />
            <Badge $x={44} $y={12}>14</Badge>
          </AppSlot>
          <AppSlot $state="run"><SettingsIcon /></AppSlot>
          <AppSlot $state="run"><TerminalIcon /></AppSlot>
          <AppSlot><DarkTile><StormIcon /></DarkTile></AppSlot>
          <Spacer />
          <Slot $w={64}><Svg w={22} h={11} s="#fff" sw={2.6}><path d="M1 10.500L11 .5l10 10" /></Svg></Slot>
          <Slot $w={64}>
            <Svg w={32} s="#fff" sw={2.2}>
              <path d="M1 16A14.500 14.500 0 0 1 29 10M30 1v9h-9M2 31v-8h8M2 23c3 4 6 7 13 7.500" strokeLinecap="butt" strokeLinejoin="miter" />
              <circle cx="24" cy="24" r="8" fill="#ff9a0a" stroke="none" />
            </Svg>
          </Slot>
          <Slot $w={64}>
            <Svg w={32} h={28}>
              <path d="M8 8c2-6 8-9 13-6 3 2 5 5 5 9L12 16z" fill="#7b7b7b" />
              <path d="M7 21c-5 0-7-3-7-7s3-7 7-7c5 0 7 4 9 8l-2 6z" fill="#bdbdbd" />
              <path d="M3 20l10-6 4 7z" fill="#fff" />
              <circle cx="23" cy="18" r="11" fill="#1c1c1c" /><circle cx="23" cy="18" r="9.200" fill="#fbe40a" />
              <path d="M23 13v5.500M23 22.500v.2" stroke="#222" strokeWidth="2.200" />
            </Svg>
          </Slot>
          <Lang>ENG<br />IN</Lang>
          <Slot $w={64}>
            <Svg w={32} h={23} s="#fff" sw={2.2}>
              <path d="M1 8.500C9-1.500 23-1.500 31 8.500M6 13.500c5.500-6.500 14.500-6.500 20 0M11 18c3-3.500 7-3.500 10 0" />
              <circle cx="16" cy="20.500" r="2" fill="#fff" strokeWidth="1" />
            </Svg>
          </Slot>
          <Slot $w={48} $pr={16}>
            <Svg w={32} h={28} s="#fff">
              <path d="M1 10v8c0 1 .5 1.500 1.500 1.500H6l6.500 6V2.500L6 8.500H2.500C1.500 8.500 1 9 1 10z" />
              <path d="M17.500 9.500c2 3 2 6 0 9M21.500 5.500c4 5 4 12 0 17M25.500 1.500c7 7 7 18 0 25" />
            </Svg>
          </Slot>
          <Slot $w={48} $pr={16}>
            <Svg w={32} h={30} s="#fff">
              <path d="M9 0c5 5 6 13 1 18H4C-2 13 3 4 9 0z" fill="#fff" stroke="none" />
              <path d="M9 7c1 6 0 10-4 14" stroke="#1c1c1c" strokeWidth="1.500" />
              <path d="M15 6h8a3.500 3.500 0 0 1 3.500 3.500v12A3.500 3.500 0 0 1 23 25H6c-3 0-4.500-1-5-3" />
              <path d="M29.500 13v5" strokeWidth="4" strokeLinecap="butt" />
            </Svg>
          </Slot>
          <Clock>11:46<br />20-08-2024</Clock>
          <Slot $w={62}>
            <Svg w={26} h={31}>
              <path d="M13 0C18 0 23 3 23 10v7l3 5c.5 1.500 0 2-1 2H1c-1 0-1.500-.5-1-2l3-5v-7C3 3 8 0 13 0zM8 26h10c0 3-2 5-5 5s-5-2-5-5z" fill="#98eaff" />
            </Svg>
          </Slot>
          <Slot $w={18} />
          <CopilotTray>
            <CopilotIcon w={46} h={40} tray />
            <PreBadge>PRE</PreBadge>
          </CopilotTray>
        </Taskbar>
      </Desktop>
    </>
  );
}
